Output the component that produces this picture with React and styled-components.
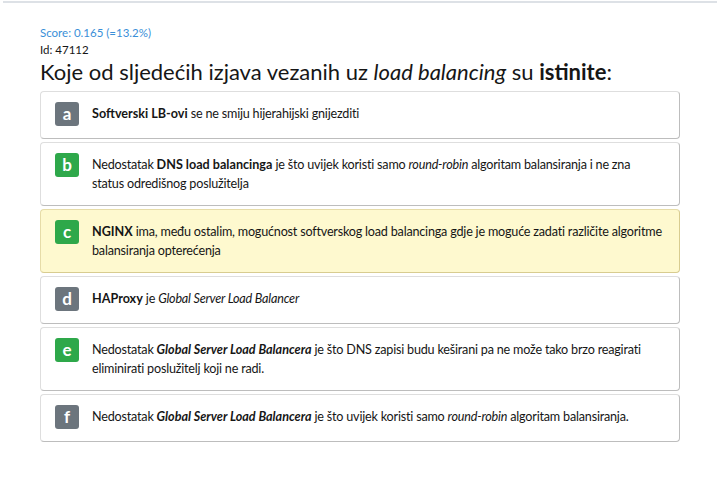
import styled, { createGlobalStyle } from 'styled-components'

const GlobalStyle = createGlobalStyle`
  body {
    margin: 0;
    background: #fff;
    font-family: Lato, "Open Sans", sans-serif;
    color: #161616;
  }
`

const Page = styled.div`
  border-top: 2px solid #dde1e6;
  margin: 1px 3px 0;
  padding: 22px 37px 20px;
`

const Score = styled.div`
  color: #3a8fd8;
  font-size: 11.5px;
  line-height: 16px;
`

const Id = styled.div`
  font-size: 11.5px;
  line-height: 16px;
  margin-top: 1px;
`

const Title = styled.h1`
  font-size: 22px;
  font-weight: 400;
  line-height: 26px;
  margin: 1px 0 6px;
`

const List = styled.div`
  display: flex;
  flex-direction: column;
  gap: 3px;
`

const Card = styled.div`
  display: flex;
  align-items: flex-start;
  gap: 13px;
  padding: 10px 14px 12px;
  border: 1px solid ${p => (p.$marked ? '#e6dca8' : '#dedede')};
  border-right-color: ${p => (p.$marked ? '#d8cc90' : '#bdbdbd')};
  border-bottom-color: ${p => (p.$marked ? '#d8cc90' : '#bdbdbd')};
  border-radius: 4px;
  background: ${p => (p.$marked ? '#fef9cf' : '#fff')};
`

const Badge = styled.span`
  flex: none;
  width: 24px;
  height: 24px;
  border-radius: 3px;
  background: ${p => (p.$correct ? '#2ea84a' : '#6c757d')};
  color: #fff;
  font-weight: 700;
  font-size: 17px;
  line-height: 23px;
  text-align: center;
`

const Text = styled.div`
  font-size: 12.6px;
  letter-spacing: -0.2px;
  line-height: 19px;
  padding-top: 2px;
`

const Strong = styled.b`
  font-weight: 700;
  letter-spacing: 0;
`

const answers = [
  { key: 'a', ok: false, body: <><Strong>Softverski LB-ovi</Strong> se ne smiju hijerahijski gnijezditi</> },
  { key: 'b', ok: true, body: <>Nedostatak <Strong>DNS load balancinga</Strong> je što uvijek koristi samo <i>round-robin</i> algoritam balansiranja i ne zna status odredišnog poslužitelja</> },
  { key: 'c', ok: true, marked: true, body: <><Strong>NGINX</Strong> ima, među ostalim, mogućnost softverskog load balancinga gdje je moguće zadati različite algoritme balansiranja opterećenja</> },
  { key: 'd', ok: false, body: <><Strong>HAProxy</Strong> je <i>Global Server Load Balancer</i></> },
  { key: 'e', ok: true, body: <>Nedostatak <Strong><i>Global Server Load Balancera</i></Strong> je što DNS zapisi budu keširani pa ne može tako brzo reagirati eliminirati poslužitelj koji ne radi.</> },
  { key: 'f', ok: false, body: <>Nedostatak <Strong><i>Global Server Load Balancera</i></Strong> je što uvijek koristi samo <i>round-robin</i> algoritam balansiranja.</> },
]

export default function App() {
  return (
    <>
      <GlobalStyle />
      <Page>
        <Score>Score: 0.165 (=13.2%)</Score>
        <Id>Id: 47112</Id>
        <Title>Koje od sljedećih izjava vezanih uz <i>load balancing</i> su <b>istinite</b>:</Title>
        <List>
          {answers.map(a => (
            <Card key={a.key} $marked={a.marked}>
              <Badge $correct={a.ok}>{a.key}</Badge>
              <Text>{a.body}</Text>
            </Card>
          ))}
        </List>
      </Page>
    </>
  )
}
